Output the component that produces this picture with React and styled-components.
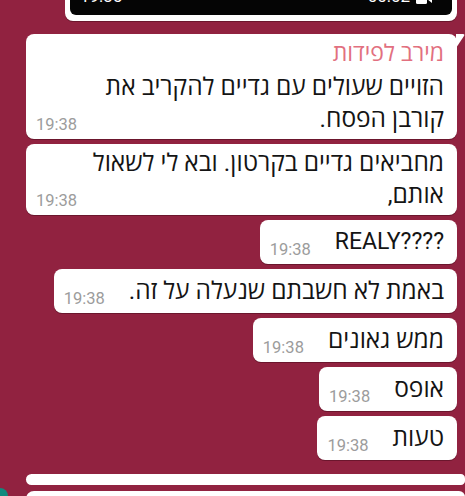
import styled, { createGlobalStyle } from 'styled-components'

const GlobalStyle = createGlobalStyle`
    html, body {
        margin: 0;
        padding: 0;
        background: #912240;
    }
`

const Screen = styled.div`
    position: relative;
    width: 465px;
    height: 496px;
    overflow: hidden;
    background: #912240;
    font-family: Roboto, "Open Sans", "Noto Sans", "Liberation Sans", sans-serif;
`

const Column = styled.div`
    display: flex;
    flex-direction: column;
    align-items: flex-end;
    gap: 5px;
    margin-top: -170px;
    padding: 0 8px 0 26px;
`

const MediaBubble = styled.div`
    width: 392px;
    margin-bottom: 8px;
    padding: 5px 5px 6px;
    box-sizing: border-box;
    background: #fff;
    border-radius: 8px;
    box-shadow: 0 1px 0 rgba(70, 10, 25, 0.5);
`

const Video = styled.div`
    height: 180px;
    background: #050505;
    border-radius: 6px;
    display: flex;
    align-items: flex-end;
    justify-content: space-between;
    padding: 0 20px 0 10px;
    color: #fff;
    font-size: 17px;
    line-height: 17px;
`

const VideoInfo = styled.div`
    display: flex;
    align-items: flex-end;
    gap: 6px;
    margin-bottom: 10px;
`

const Bubble = styled.div`
    position: relative;
    display: flex;
    flex-direction: column;
    box-sizing: border-box;
    width: ${p => (p.$wide ? '100%' : 'auto')};
    padding: 3px 13px 4px 10px;
    background: #fff;
    border-radius: 8px;
    box-shadow: 0 1px 0 rgba(70, 10, 25, 0.5);
`

const Tail = styled.svg`
    position: absolute;
    top: 0;
    right: -8px;
`

const Sender = styled.div`
    direction: rtl;
    color: #e2707f;
    font-size: 23px;
    line-height: 34px;
`

const Row = styled.div`
    display: flex;
    align-items: flex-end;
    gap: 24px;
`

const Time = styled.span`
    flex: none;
    color: #9c9c9c;
    font-size: 16.5px;
    line-height: 20px;
`

const Text = styled.div`
    flex: 1;
    min-width: 0;
    direction: rtl;
    text-align: right;
    white-space: nowrap;
    color: #141414;
    font-size: ${p => (p.$latin ? '23px' : '24.5px')};
    line-height: 32px;
    padding: ${p => (p.$single ? '3px 0 2px' : '0')};
`

const Line = styled.div`
    unicode-bidi: plaintext;
`

const Footer = styled.div`
    align-self: stretch;
    margin-right: -8px;
    margin-top: 9px;
    display: flex;
    flex-direction: column;
    gap: 6px;
`

const Strip = styled.div`
    height: ${p => p.$h}px;
    background: #fff;
    border-radius: 8px 6px 6px 8px;
`

const Fab = styled.div`
    position: absolute;
    left: -8px;
    top: 488px;
    width: 16px;
    height: 16px;
    border-radius: 50%;
    background: #0f8a7e;
`

const messages = [
    { id: 1, sender: 'מירב לפידות', lines: ['הזויים שעולים עם גדיים להקריב את', 'קורבן הפסח.'], wide: true, tail: true },
    { id: 2, lines: ['מחביאים גדיים בקרטון. ובא לי לשאול', 'אותם,'], wide: true },
    { id: 3, lines: ['REALY????'], latin: true },
    { id: 4, lines: ['באמת לא חשבתם שנעלה על זה.'] },
    { id: 5, lines: ['ממש גאונים'] },
    { id: 6, lines: ['אופס'] },
    { id: 7, lines: ['טעות'] },
]

function Message({ msg }) {
    return (
        <Bubble $wide={msg.wide}>
            {msg.tail && (
                <Tail width="9" height="14" viewBox="0 0 9 14">
                    <path d="M0 0 H7 Q9 0 8 2 L0 14 Z" fill="#fff" />
                </Tail>
            )}
            {msg.sender && <Sender>{msg.sender}</Sender>}
            <Row>
                <Time>19:38</Time>
                <Text $single={msg.lines.length === 1} $latin={msg.latin}>
                    {msg.lines.map((l, i) => (
                        <Line key={i}>{l}</Line>
                    ))}
                </Text>
            </Row>
        </Bubble>
    )
}

export default function App() {
    return (
        <Screen>
            <GlobalStyle />
            <Column>
                <MediaBubble>
                    <Video>
                        <VideoInfo>19:35</VideoInfo>
                        <VideoInfo>
                            00:02
                            <svg width="16" height="12" viewBox="0 0 16 12">
                                <rect x="0" y="1" width="11" height="10" rx="1.5" fill="#fff" />
                                <path d="M11 6 L16 2 V10 Z" fill="#fff" />
                            </svg>
                        </VideoInfo>
                    </Video>
                </MediaBubble>
                {messages.map(m => (
                    <Message key={m.id} msg={m} />
                ))}
                <Footer>
                    <Strip $h={11} />
                    <Strip $h={40} />
                </Footer>
            </Column>
            <Fab />
        </Screen>
    )
}
